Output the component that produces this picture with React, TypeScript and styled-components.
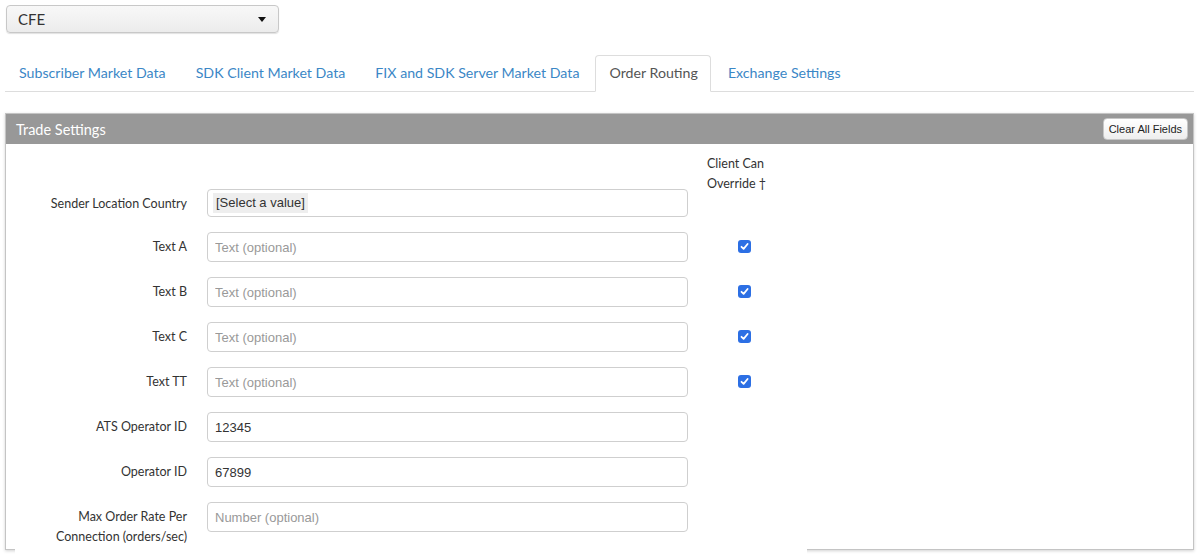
import * as React from 'react';
import styled, { createGlobalStyle } from 'styled-components';

const GlobalStyle = createGlobalStyle`
    html, body {
        margin: 0;
        padding: 0;
        background: #fff;
        font-family: Lato, "Open Sans", sans-serif;
        color: #333;
    }
    * {
        box-sizing: border-box;
    }
`;

const Page = styled.div`
    padding: 5px 4px 0 5px;
    height: 554px;
    overflow: hidden;
`;

const Dropdown = styled.div`
    width: 273px;
    height: 28px;
    margin-left: 1px;
    display: flex;
    align-items: center;
    justify-content: space-between;
    padding: 0 12px 0 11px;
    border: 1px solid #c8c8c8;
    border-radius: 4px;
    background: linear-gradient(#f8f8f8, #ececec);
    box-shadow: 0 1px 1px rgba(0, 0, 0, 0.12);
    font-size: 15px;
    color: #333;

    &::after {
        content: '';
        width: 0;
        height: 0;
        border-left: 4px solid transparent;
        border-right: 4px solid transparent;
        border-top: 5px solid #111;
    }
`;

const TabBar = styled.div`
    display: flex;
    margin-top: 22px;
    border-bottom: 1px solid #ddd;
    height: 37px;
`;

const Tab = styled.div<{ $active?: boolean }>`
    height: 37px;
    margin-bottom: -1px;
    padding: 0 12px 3px 13px;
    margin-right: 3px;
    display: flex;
    align-items: center;
    font-size: 14.2px;
    color: ${(p) => (p.$active ? '#555' : '#3b87c6')};
    border: 1px solid ${(p) => (p.$active ? '#ddd' : 'transparent')};
    border-bottom-color: ${(p) => (p.$active ? '#fff' : 'transparent')};
    border-radius: 4px 4px 0 0;
    background: ${(p) => (p.$active ? '#fff' : 'transparent')};
`;

const Panel = styled.div`
    margin-top: 21px;
    border: 1px solid #c4c4c4;
    box-shadow: 0 1px 3px rgba(0, 0, 0, 0.18);
`;

const PanelHeader = styled.div`
    height: 30px;
    background: #989898;
    display: flex;
    align-items: center;
    justify-content: space-between;
    padding: 0 5px 0 10px;
    color: #fff;
    font-size: 14.5px;
`;

const ClearButton = styled.button`
    height: 22px;
    padding: 0 5px;
    border: 1px solid #c6c6c6;
    border-radius: 4px;
    background: linear-gradient(#ffffff, #eeeeee);
    font-family: "Liberation Sans", Arial, sans-serif;
    font-size: 11px;
    color: #222;
`;

const PanelBody = styled.div`
    height: 405px;
    padding: 9px 0 0 9px;
`;

const Form = styled.div`
    width: 792px;
    background: #fff;
    padding-bottom: 14px;
    position: relative;
    z-index: 1;
`;

const Row = styled.div<{ $first?: boolean }>`
    display: grid;
    grid-template-columns: 172px 480px 101px;
    column-gap: 20px;
    align-items: start;
    margin-top: ${(p) => (p.$first ? '0' : '15px')};
`;

const Label = styled.div`
    text-align: right;
    font-size: 12.5px;
    line-height: 20px;
    padding-top: 5px;
    color: #333;
`;

const HeadLabel = styled.div`
    font-size: 12.5px;
    line-height: 20px;
    color: #333;
    height: 36px;
    padding-top: 1px;
`;

const Field = styled.input`
    width: 481px;
    height: 30px;
    border: 1px solid #cfcfcf;
    border-radius: 4px;
    padding: 0 7px;
    font-family: "Liberation Sans", Arial, sans-serif;
    font-size: 13px;
    color: #333;
    outline: none;

    &::placeholder {
        color: #999;
    }
`;

const SelectBox = styled.div`
    width: 481px;
    height: 28px;
    border: 1px solid #cfcfcf;
    border-radius: 4px;
    padding: 3px 5px;
    display: flex;
    align-items: center;
`;

const SelectValue = styled.span`
    background: #eee;
    padding: 0 3px 0 3px;
    line-height: 20px;
    font-family: "Liberation Sans", Arial, sans-serif;
    font-size: 13px;
    color: #333;
`;

const CheckCell = styled.div`
    padding: 8px 0 0 31px;
`;

const Check = styled.span`
    width: 13px;
    height: 13px;
    border-radius: 3px;
    background: #2c6fe4;
    display: flex;
    align-items: center;
    justify-content: center;
`;

const CheckMark = () => (
    <Check>
        <svg width="9" height="9" viewBox="0 0 9 9">
            <path d="M1.5 4.8 L3.6 6.8 L7.6 2" stroke="#fff" strokeWidth="1.8" fill="none" strokeLinecap="round" strokeLinejoin="round" />
        </svg>
    </Check>
);

const tabs = ['Subscriber Market Data', 'SDK Client Market Data', 'FIX and SDK Server Market Data', 'Order Routing', 'Exchange Settings'];

const rows = [
    { label: 'Text A', placeholder: 'Text (optional)', check: true },
    { label: 'Text B', placeholder: 'Text (optional)', check: true },
    { label: 'Text C', placeholder: 'Text (optional)', check: true },
    { label: 'Text TT', placeholder: 'Text (optional)', check: true },
    { label: 'ATS Operator ID', value: '12345' },
    { label: 'Operator ID', value: '67899' },
    { label: 'Max Order Rate Per Connection (orders/sec)', placeholder: 'Number (optional)' },
];

export default function App() {
    return (
        <Page>
            <GlobalStyle />
            <Dropdown>CFE</Dropdown>
            <TabBar>
                {tabs.map((t) => (
                    <Tab key={t} $active={t === 'Order Routing'}>
                        {t}
                    </Tab>
                ))}
            </TabBar>
            <Panel>
                <PanelHeader>
                    <span>Trade Settings</span>
                    <ClearButton>Clear All Fields</ClearButton>
                </PanelHeader>
                <PanelBody>
                    <Form>
                        <Row $first>
                            <div />
                            <div />
                            <HeadLabel>
                                Client Can
                                <br />
                                Override †
                            </HeadLabel>
                        </Row>
                        <Row $first>
                            <Label>Sender Location Country</Label>
                            <SelectBox>
                                <SelectValue>[Select a value]</SelectValue>
                            </SelectBox>
                            <div />
                        </Row>
                        {rows.map((r) => (
                            <Row key={r.label}>
                                <Label>
                                    {r.label === 'Max Order Rate Per Connection (orders/sec)' ? (
                                        <>
                                            Max Order Rate Per
                                            <br />
                                            Connection (orders/sec)
                                        </>
                                    ) : (
                                        r.label
                                    )}
                                </Label>
                                <Field placeholder={r.placeholder} defaultValue={r.value} />
                                <CheckCell>{r.check && <CheckMark />}</CheckCell>
                            </Row>
                        ))}
                    </Form>
                </PanelBody>
            </Panel>
        </Page>
    );
}
